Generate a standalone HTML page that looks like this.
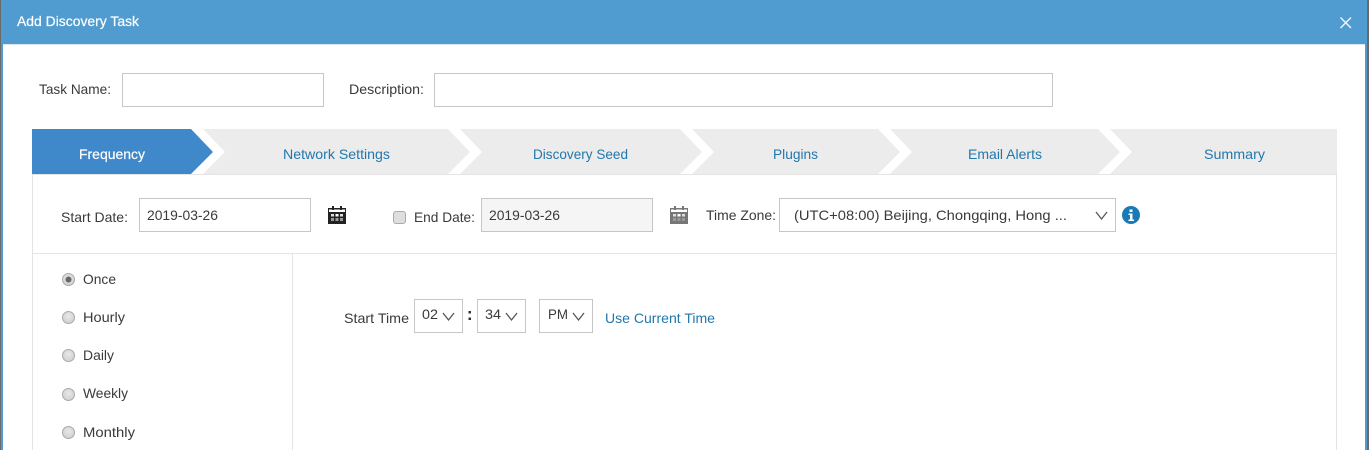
<!DOCTYPE html>
<html><head><meta charset="utf-8"><style>
html,body{margin:0;padding:0;background:#fff;width:1369px;height:450px;overflow:hidden}
svg{display:block}
text{font-family:"Liberation Sans",sans-serif;font-size:14px;fill:#3a3a3a}
.l{fill:#2278ad}
.w{fill:#fff}
.box{fill:#fff;stroke:#c6c6c6;stroke-width:1}
.chev{fill:none;stroke:#555;stroke-width:1.3}
</style></head><body>
<svg width="1369" height="450" viewBox="0 0 1369 450" xmlns="http://www.w3.org/2000/svg">
<defs>
<g id="cal">
<rect x="0.5" y="2.5" width="17" height="15" fill="#fff" stroke="currentColor"/>
<rect x="0" y="2" width="18" height="1.500" fill="currentColor"/>
<rect x="4" y="0" width="2" height="4" fill="currentColor"/><rect x="12" y="0" width="2" height="4" fill="currentColor"/>
<rect x="1" y="6" width="16" height="11" fill="currentColor"/>
<rect x="3" y="8" width="3" height="2.500" fill="#ddd"/><rect x="7.500" y="8" width="3" height="2.500" fill="#fff"/><rect x="12" y="8" width="3" height="2.500" fill="#ddd"/>
<rect x="3" y="12" width="3" height="3" fill="#999"/><rect x="7.500" y="12" width="3" height="3" fill="#999"/><rect x="12" y="12" width="3" height="3" fill="#999"/>
</g>
<radialGradient id="rg" cx="50%" cy="40%" r="60%"><stop offset="0" stop-color="#e8e8e8"/><stop offset="1" stop-color="#cfcfcf"/></radialGradient>
</defs>

<!-- backdrop and modal -->
<rect x="0" y="0" width="1369" height="450" fill="#6a6a6a"/>
<rect x="1" y="0" width="1366" height="450" fill="#509cd1"/>
<rect x="3" y="44" width="1362" height="406" fill="#fff"/>
<rect x="3" y="44" width="1362" height="1" fill="#dbe8f2"/>

<text x="17" y="26" textLength="122" lengthAdjust="spacingAndGlyphs" class="w" stroke="#fff" stroke-width=".2">Add Discovery Task</text>
<path d="M1340.5 17.5L1351 28M1351 17.5L1340.5 28" stroke="#f2f7fb" stroke-width="1.4" fill="none"/>

<!-- name row -->
<text x="39" y="94" textLength="72" lengthAdjust="spacingAndGlyphs">Task Name:</text>
<rect class="box" x="122.500" y="73.500" width="201" height="33"/>
<text x="349" y="94" textLength="75" lengthAdjust="spacingAndGlyphs">Description:</text>
<rect class="box" x="434.500" y="73.500" width="618" height="33"/>

<!-- tabs -->
<polygon points="203,129 448,129 470,152 448,174 203,174 225,152" fill="#ececec"/>
<polygon points="460,129 680,129 702,152 680,174 460,174 482,152" fill="#ececec"/>
<polygon points="692,129 878,129 900,152 878,174 692,174 714,152" fill="#ececec"/>
<polygon points="890,129 1098,129 1120,152 1098,174 890,174 912,152" fill="#ececec"/>
<polygon points="1110,129 1337,129 1337,174 1110,174 1132,152" fill="#ececec"/>
<polygon points="32,129 191,129 213,152 191,174 32,174" fill="#3f88c9"/>
<text x="79" y="159" textLength="66" lengthAdjust="spacingAndGlyphs" class="w" stroke="#fff" stroke-width=".2">Frequency</text>
<text x="283" y="159" textLength="107" lengthAdjust="spacingAndGlyphs" class="l">Network Settings</text>
<text x="533" y="159" textLength="95" lengthAdjust="spacingAndGlyphs" class="l">Discovery Seed</text>
<text x="773" y="159" textLength="45" lengthAdjust="spacingAndGlyphs" class="l">Plugins</text>
<text x="968" y="159" textLength="74" lengthAdjust="spacingAndGlyphs" class="l">Email Alerts</text>
<text x="1204" y="159" textLength="61" lengthAdjust="spacingAndGlyphs" class="l">Summary</text>

<!-- panel -->
<rect x="32" y="174" width="1305" height="1" fill="#e4e4e4"/>
<rect x="32" y="174" width="1" height="276" fill="#e4e4e4"/>
<rect x="1336" y="174" width="1" height="276" fill="#e4e4e4"/>
<rect x="32" y="253" width="1305" height="1" fill="#e4e4e4"/>
<rect x="292" y="254" width="1" height="196" fill="#e4e4e4"/>

<!-- date row -->
<text x="61" y="222" textLength="67" lengthAdjust="spacingAndGlyphs">Start Date:</text>
<rect class="box" x="139.500" y="198.500" width="171" height="33"/>
<text x="147" y="220" textLength="71" lengthAdjust="spacingAndGlyphs">2019-03-26</text>
<use href="#cal" x="328" y="206" color="#222"/>
<rect x="393.500" y="211.500" width="12" height="12" rx="2.500" fill="#dedede" stroke="#aaa"/>
<text x="414" y="222" textLength="61" lengthAdjust="spacingAndGlyphs">End Date:</text>
<rect x="481.500" y="198.500" width="171" height="33" fill="#f5f5f5" stroke="#c6c6c6"/>
<text x="489" y="220" textLength="71" lengthAdjust="spacingAndGlyphs">2019-03-26</text>
<use href="#cal" x="670" y="206" color="#777"/>
<text x="706" y="220" textLength="70" lengthAdjust="spacingAndGlyphs">Time Zone:</text>
<rect class="box" x="779.500" y="198.500" width="336" height="33"/>
<text x="794" y="220" textLength="273" lengthAdjust="spacingAndGlyphs" fill="#444">(UTC+08:00) Beijing, Chongqing, Hong ...</text>
<path class="chev" d="M1096 212L1101.500 219L1107 212"/>
<circle cx="1131" cy="215" r="9" fill="#1a7ab5"/>
<rect x="1129.500" y="209.500" width="3" height="2.500" fill="#fff"/>
<path d="M1128.500 213.500H1132.500V219.500H1134V221H1128.500V219.500H1130V215H1128.500Z" fill="#fff"/>

<!-- radios -->
<circle cx="68.500" cy="279.500" r="6" fill="url(#rg)" stroke="#aaa"/>
<circle cx="68.500" cy="279.500" r="3" fill="#666"/>
<circle cx="68.500" cy="317.500" r="6" fill="url(#rg)" stroke="#aaa"/>
<circle cx="68.500" cy="355.500" r="6" fill="url(#rg)" stroke="#aaa"/>
<circle cx="68.500" cy="394.500" r="6" fill="url(#rg)" stroke="#aaa"/>
<circle cx="68.500" cy="432.500" r="6" fill="url(#rg)" stroke="#aaa"/>
<text x="83" y="284" textLength="33" lengthAdjust="spacingAndGlyphs">Once</text>
<text x="83" y="322" textLength="42" lengthAdjust="spacingAndGlyphs">Hourly</text>
<text x="83" y="360" textLength="31" lengthAdjust="spacingAndGlyphs">Daily</text>
<text x="83" y="398" textLength="45" lengthAdjust="spacingAndGlyphs">Weekly</text>
<text x="83" y="437" textLength="52" lengthAdjust="spacingAndGlyphs">Monthly</text>

<!-- start time -->
<text x="344" y="323" textLength="65" lengthAdjust="spacingAndGlyphs">Start Time</text>
<rect class="box" x="414.500" y="299.500" width="48" height="33"/>
<text x="422" y="319" textLength="16" lengthAdjust="spacingAndGlyphs">02</text>
<path class="chev" d="M443 313L448.500 320L454 313"/>
<rect x="468.500" y="311" width="2.500" height="2.500" fill="#333"/><rect x="468.500" y="317.500" width="2.500" height="2.500" fill="#333"/>
<rect class="box" x="477.500" y="299.500" width="48" height="33"/>
<text x="485" y="319" textLength="16" lengthAdjust="spacingAndGlyphs">34</text>
<path class="chev" d="M506 313L511.500 320L517 313"/>
<rect class="box" x="539.500" y="299.500" width="53" height="33"/>
<text x="548" y="319" textLength="20" lengthAdjust="spacingAndGlyphs">PM</text>
<path class="chev" d="M573 313L578.500 320L584 313"/>
<text x="605" y="323" textLength="110" lengthAdjust="spacingAndGlyphs" class="l">Use Current Time</text>
</svg>
</body></html>
